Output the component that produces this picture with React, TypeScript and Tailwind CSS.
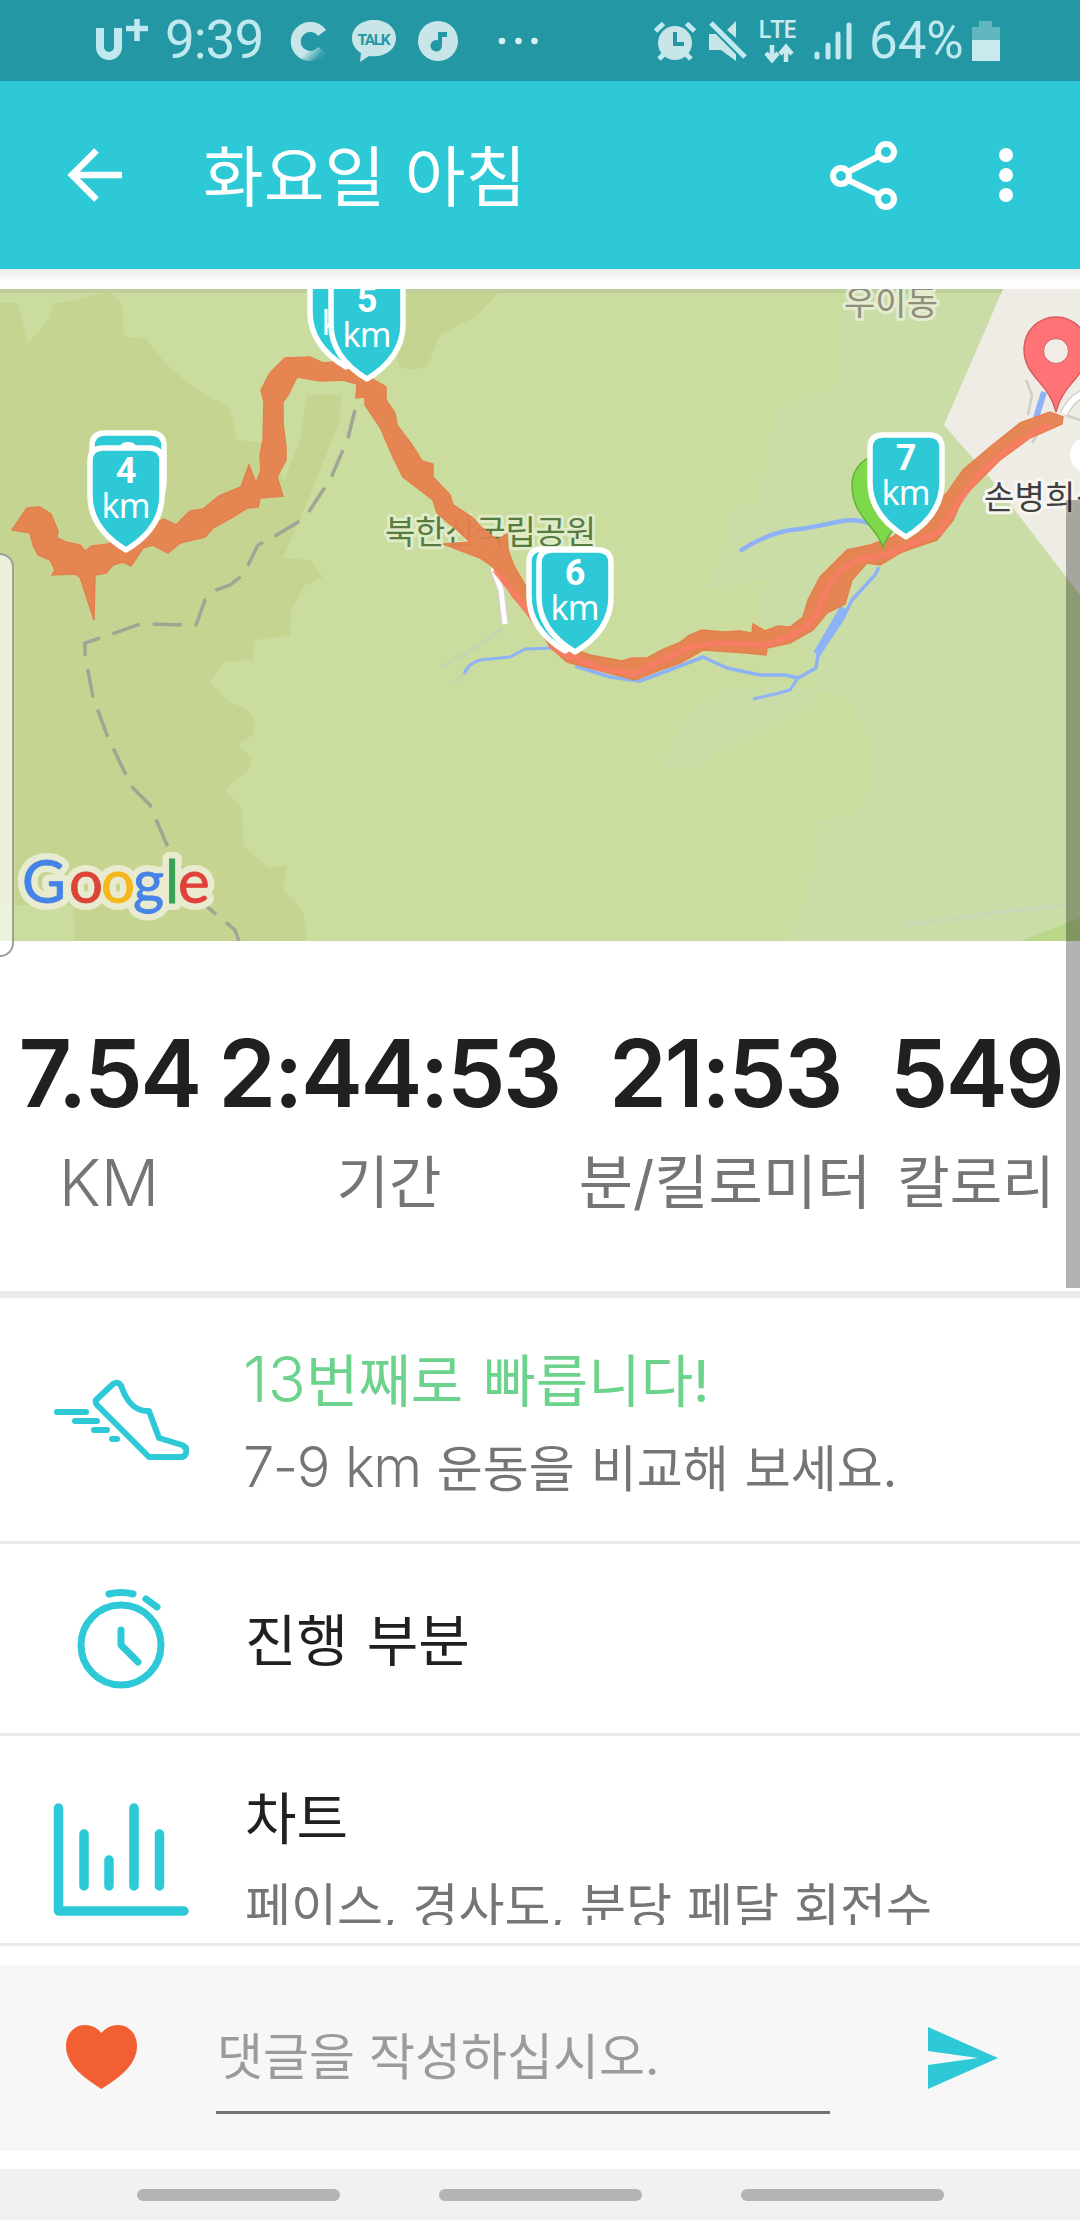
import React from "react";

const TEAL = "#2dc9d7";

function StatusBar() {
  return (
    <div className="flex h-[81px] items-center bg-[#2497a5] pl-[95px] pr-[80px] font-[Roboto] text-[#bfe9ee]">
      <svg width="54" height="44" viewBox="0 0 54 44" fill="none" stroke="#bfe9ee" className="shrink-0">
        <path d="M5 9v19a9 9 0 0 0 18 0V9" strokeWidth="8" />
        <path d="M31 9.500h22M42 0v22" strokeWidth="5.500" />
      </svg>
      <span className="ml-[16px] w-[101px] whitespace-nowrap text-[53px] font-normal leading-none tracking-[-1px]">9:39</span>
      <svg width="38" height="40" viewBox="0 0 38 40" fill="none" className="ml-[24px] shrink-0">
        <defs>
          <linearGradient id="fade" x1="0.3" y1="0.3" x2="0.95" y2="0.95">
            <stop offset="0.5" stopColor="#c8e6e8" />
            <stop offset="1" stopColor="#c8e6e8" stopOpacity="0.1" />
          </linearGradient>
        </defs>
        <path d="M32 12A14.500 14.500 0 1 0 32 29" stroke="url(#fade)" strokeWidth="10" />
      </svg>
      <svg width="46" height="44" viewBox="0 0 46 44" className="ml-[23px] shrink-0">
        <path d="M23 1C10 1 1 9 1 19c0 7 4 12 9 15l-1 9 9-6c17 2 27-7 27-18C45 9 36 1 23 1Z" fill="#c8e6e8" />
        <text x="23" y="25.500" textAnchor="middle" textLength="33" fontFamily="Roboto" fontWeight="700" fontSize="15.500" fill="#2497a5">TALK</text>
      </svg>
      <svg width="40" height="40" viewBox="0 0 40 40" className="ml-[21px] shrink-0">
        <circle cx="20" cy="20" r="20" fill="#c8e6e8" />
        <path d="M20 11h9v5h-5v8.500a5.800 5.800 0 1 1-4-5.200Z" fill="#2497a5" />
      </svg>
      <svg width="42" height="8" viewBox="0 0 42 8" fill="#d8f0f2" className="ml-[40px] shrink-0">
        <circle cx="4" cy="4" r="3.300" />
        <circle cx="20.500" cy="4" r="3.300" />
        <circle cx="36.500" cy="4" r="3.300" />
      </svg>
      <div className="ml-auto flex items-center">
        <svg width="42" height="40" viewBox="0 0 42 40">
          <circle cx="21" cy="22" r="17" fill="#c8e6e8" />
          <path d="M1.500 10 9.500 2.500M40.500 10 32.500 2.500M5 38l6-6M37 38l-6-6" stroke="#c0eaf0" strokeWidth="5" />
          <path d="M21 11v12h9" stroke="#2497a5" strokeWidth="4" fill="none" />
        </svg>
        <svg width="40" height="40" viewBox="0 0 40 40" className="ml-[12px]">
          <path d="M1 13h11l16 15v12L13 29H1ZM28 0v17l-9-8Z" fill="#c8e6e8" />
          <path d="M3 2l34 34" stroke="#2497a5" strokeWidth="9" />
          <path d="M3 2l34 34" stroke="#c0eaf0" strokeWidth="5" />
        </svg>
        <svg width="40" height="44" viewBox="0 0 40 44" className="ml-[10px]">
          <text x="0" y="19" textLength="39" fontFamily="Open Sans" fontWeight="600" fontSize="25" fill="#c8eaee">LTE</text>
          <path d="M14 26v14M8 34l6 7 6-7M28 43V29M22 35l6-7 6 7" stroke="#c8eaee" strokeWidth="4.500" fill="none" />
        </svg>
        <svg width="38" height="40" viewBox="0 0 38 40" className="ml-[16px]" stroke="#c0eaf0" strokeWidth="5" strokeLinecap="round">
          <path d="M3 33v3M14 24v12M24 13v23M35 4v32" />
        </svg>
        <span className="ml-[17px] w-[94px] whitespace-nowrap text-[51px] font-normal leading-none">64%</span>
        <svg width="28" height="42" viewBox="0 0 28 42" className="ml-[9px]">
          <path d="M0 7h7V1h13v6h8v13H0Z" fill="#62b6c0" />
          <path d="M0 20h28v21H0Z" fill="#c8eaee" />
        </svg>
      </div>
    </div>
  );
}

function AppBar() {
  return (
    <div className="flex h-[188px] items-center bg-[#2dc9d7] pl-[66px] pr-[66px] text-white">
      <svg width="58" height="56" viewBox="0 0 58 56" fill="none" stroke="white" strokeWidth="6.500">
        <path d="M56 28H7M30.500 3.500 6 28l24.500 24.500" />
      </svg>
      <h1 className="ml-[79px] mt-[4px] whitespace-nowrap text-[66px] font-normal leading-none [word-spacing:1px]">화요일 아침</h1>
      <svg width="70" height="72" viewBox="0 0 70 72" fill="none" stroke="white" strokeWidth="6" className="ml-auto">
        <circle cx="57" cy="13" r="8" />
        <circle cx="12" cy="37" r="8" />
        <circle cx="57" cy="60" r="8" />
        <path d="M50 17 19 33M50 56 19 41" />
      </svg>
      <svg width="16" height="56" viewBox="0 0 16 56" fill="white" className="ml-[99px]">
        <circle cx="8" cy="8" r="7" />
        <circle cx="8" cy="28" r="7" />
        <circle cx="8" cy="48" r="7" />
      </svg>
    </div>
  );
}

function KmPin({ x, y, n }: { x: number; y: number; n: string }) {
  return (
    <g transform={`translate(${x} ${y})`}>
      <path
        d="M-36-92Q-36-105-23-105H23Q36-105 36-92V-58C36-33 20-15 0-3C-20-15-36-33-36-58Z"
        fill={TEAL}
        stroke="white"
        strokeWidth="5.500"
        strokeLinejoin="round"
      />
      <text y="-70" textAnchor="middle" fontFamily="Roboto" fontWeight="700" fontSize="36" fill="white">{n}</text>
      <text y="-35" textAnchor="middle" fontFamily="Noto Sans, sans-serif" fontSize="34" textLength="49" fill="white">km</text>
    </g>
  );
}

const GOOGLE: [string, number, string][] = [
  ["G", 22, "#4583e8"],
  ["o", 69, "#db4437"],
  ["o", 101, "#f4b71c"],
  ["g", 133, "#4583e8"],
  ["l", 165, "#34a353"],
  ["e", 178, "#e0413a"],
];

function RouteMap() {
  return (
    <svg width="1080" height="652" viewBox="0 289 1080 652" className="block shrink-0">
      <rect y="289" width="1080" height="652" fill="#cadc9e" />
      <path d="M845 289 838 385 775 412 760 500 730 510 720 565 700 590 765 580 762 620 800 640 820 700 780 720 720 750 700 768 665 768 672 740 690 715 720 690 800 685 850 700 870 740 875 780 855 815 820 820 812 880 790 941H1080V289Z" fill="#cbdda7" />
      <path d="M0 289H108L122 305 124 337 145 338 168 366 195 388 230 408 237 440 265 443 300 440 307 395 341 395 340 420 310 495 283 558 310 560 323 577 305 585 291 610 290 635 255 640 253 660 225 662 210 682 228 702 245 708 255 718 253 735 238 745 252 758 248 770 225 790 242 808 243 845 268 868 287 865 283 890 303 910 307 941H0Z" fill="#c5d591" />
      <path d="M262 443 284 480 300 440 290 395 302 377 345 380 340 395 307 395 300 440Z" fill="#cadc9e" />
      <path d="M405 292H500L475 317 440 335 428 365 415 370 400 368 392 345Z" fill="#c5d591" />
      <path d="M17 299 55 297 48 320 28 344ZM0 905 73 905 75 941H0ZM0 289H120L60 303H0Z" fill="#cadc9e" />
      <rect y="289" width="1080" height="4" fill="#becf9b" />
      <path d="M1003 289 944 425 990 478 1080 595V289Z" fill="#efece5" />
      <path d="M1020 941 1080 918V941Z" fill="#b9d88a" />
      <path d="M905 925 960 918 1000 912 1070 905" stroke="#c9d7b4" strokeWidth="4" fill="none" />
      <path d="M440 668 480 645 503 628M450 685 470 670" stroke="#c6d5ac" strokeWidth="4" fill="none" />
      <path
        d="M355 410 348 438 331 478 308 513 298 522 275 536 258 545 248 565 240 577 230 585 216 590 205 600 196 625 140 624 112 634 85 643 85 655 93 697 107 735 125 773 133 788 150 805 166 843 176 860 205 905 235 930 239 941"
        fill="none"
        stroke="#a0a594"
        strokeWidth="3.500"
        strokeDasharray="29 13"
      />
      <g fill="none" stroke="#8db2f5" strokeLinejoin="round">
        <path d="M740 551Q770 531 800 529C835 524 850 515 870 524L884 535" strokeWidth="4.500" />
        <path d="M879 567 875 575 852 600 842 620 818 655 816 668 798 678 785 675 760 675 727 668 703 657 680 666 640 681 610 677 575 666" strokeWidth="3.500" />
        <path d="M798 678 790 690 775 694 753 699M464 674Q470 659 490 659L510 657 525 649 555 648" strokeWidth="3" />
        <path d="M844 608 817 654" strokeWidth="8" />
        <path d="M1044 392 1036 418" strokeWidth="6" />
      </g>
      <path d="M493 568 501 590 505 624" stroke="#d8d0cc" strokeWidth="8" fill="none" />
      <path d="M493 568 501 590 505 624" stroke="white" strokeWidth="5" fill="none" />
      <path d="M1026 380 1032 395 1028 415M1032 443 1040 430M1065 415 1080 420" stroke="#cfcfc4" strokeWidth="2.500" fill="none" />
      <path d="M1064 414Q1070 400 1082 394" stroke="#d4d4cc" strokeWidth="9" fill="none" />
      <path d="M1064 414Q1070 400 1082 394" stroke="white" strokeWidth="6" fill="none" />
      <g fontFamily="Noto Sans CJK KR, sans-serif" paintOrder="stroke" strokeLinejoin="round">
        <text x="385" y="544" fontSize="33" textLength="211" fill="#577c40" stroke="#e0ebc8" strokeWidth="6">북한산국립공원</text>
        <text x="844" y="315" fontSize="34" textLength="94" fill="#8f8f7c" stroke="#e4ecd0" strokeWidth="6">우이동</text>
        <text x="984" y="509" fontSize="33" textLength="122" fill="#404040" stroke="#f7f6f0" strokeWidth="6">손병희선</text>
      </g>
      <path
        d="M12 530 27 508 40 507 51 514 58 531 57 538 66 542 80 545 85 551 92 546 108 544 130 535 164 519 176 525 190 511 203 509 219 496 241 487 249 465 256 483 261 470 260 455 263 440 264 402 261 390 270 373 285 358 310 357 323 363 335 362 367 376 386 387 386 400 395 413 397 425 412 445 422 461 433 464 433 477 450 495 453 505 472 517 480 526 497 540 507 534 508 550 514 566 528 590 552 640 570 648 590 655 622 661 632 658 647 658 664 649 679 643 690 635 702 630 723 632 740 631 752 633 753 624 765 631 778 626 790 627 803 617 808 600 820 577 847 550 870 545 893 537 920 513 947 493 963 470 990 447 1020 423 1050 412 1063 417 1062 424 1030 438 1000 460 980 480 963 497 953 520 937 540 913 548 900 553 880 565 867 563 852 580 845 604 827 613 813 630 790 643 767 648 766 655 747 653 703 650 680 663 660 670 635 680 609 673 567 662 550 647 540 630 527 613 513 597 493 567 480 558 443 544 470 542 457 530 437 513 433 500 403 477 393 457 380 427 365 405 365 397 356 398 357 384 343 380 320 381 297 377 288 395 283 402 283 423 286 447 286 460 277 477 283 496 260 498 258 507 247 508 233 517 213 528 205 537 180 543 168 553 153 545 143 548 131 566 123 562 113 565 106 573 95 575 94 620 80 577 75 574 52 575 55 570 50 560 38 555 33 545 30 533Z"
        fill="#e5804e"
        fillOpacity="0.94"
        stroke="#e5804e"
        strokeWidth="1.500"
      />
      <path
        d="M495 570 513 592 540 628 560 652 600 668 634 674 660 661 690 647 715 643 765 645Q808 634 819 610 828 574 858 560L890 554 915 542 940 532Q956 505 975 480 1005 446 1050 424"
        stroke="#fa7c66"
        strokeOpacity="0.8"
        strokeWidth="6"
        strokeLinejoin="round"
        fill="none"
      />
      <path d="M883 547C876 525 852 517 852 485A31 31 0 0 1 914 485C914 517 890 525 883 547Z" fill="#7fd84a" stroke="#5fb338" strokeWidth="1.500" />
      <path d="M1056 412C1049 382 1024 377 1024 349A32 32 0 0 1 1088 349C1088 377 1063 382 1056 412Z" fill="#ff7376" stroke="#d95d5f" strokeWidth="1.500" />
      <circle cx="1056" cy="351" r="12.500" fill="#f1ede6" stroke="#d95d5f" />
      <circle cx="1088" cy="455" r="18" fill="white" />
      <KmPin x={128} y={538} n="3" />
      <KmPin x={126} y={553} n="4" />
      <KmPin x={346} y={370} n="2" />
      <KmPin x={367} y={382} n="5" />
      <KmPin x={565} y={654} n="1" />
      <KmPin x={575} y={655} n="6" />
      <KmPin x={906} y={540} n="7" />
      <g fontFamily="Lato, sans-serif" fontSize="60" fontWeight="400" strokeLinejoin="round">
        {GOOGLE.map(([c, x], i) => (
          <text key={i} x={x} y="903" fill="#e8ebcf" stroke="#e8ebcf" strokeWidth="14">{c}</text>
        ))}
        {GOOGLE.map(([c, x, color], i) => (
          <text key={i} x={x} y="903" fill={color} stroke={color} strokeWidth="0.800">{c}</text>
        ))}
      </g>
    </svg>
  );
}

function Stat({ value, label, className, labelClass }: { value: string; label: string; className: string; labelClass: string }) {
  return (
    <div className={"flex shrink-0 flex-col items-center whitespace-nowrap " + className}>
      <div className="text-[93px] font-semibold leading-[92px] tracking-[-2.500px] text-[#202020]">{value}</div>
      <div className={"mt-[32px] leading-[64px] text-[#757575] " + labelClass}>{label}</div>
    </div>
  );
}

function ShoeIcon() {
  return (
    <svg width="136" height="84" viewBox="53 1379 136 84" fill="none" stroke={TEAL} strokeWidth="6" strokeLinecap="round" strokeLinejoin="round">
      <path d="M96 1400 113 1384Q119 1380 122 1388C127 1402 136 1412 149 1411L159 1438 182 1445Q188 1448 186 1453 185 1457 181 1457H149L97 1405Q95 1402 96 1400Z" />
      <path d="M57 1412h29M75 1421h22M94 1430h13M112 1439h5" />
    </svg>
  );
}

function StopwatchIcon() {
  return (
    <svg width="92" height="104" viewBox="75 1587 92 104" fill="none" stroke={TEAL} strokeWidth="7" strokeLinecap="round" strokeLinejoin="round">
      <circle cx="121" cy="1645" r="40" />
      <path d="M121 1630v15l17 17M109 1594q12-3 24 0M146 1599l11 8" />
    </svg>
  );
}

function ChartIcon() {
  return (
    <svg width="136" height="114" viewBox="53 1802 136 114" fill="none" stroke={TEAL} strokeWidth="9.500" strokeLinecap="round" strokeLinejoin="round">
      <path d="M58.500 1808v103H184M84 1834v52M109 1860v26M134 1808v78M159.500 1834v52" />
    </svg>
  );
}

function CommentBar() {
  return (
    <div className="flex h-[186px] shrink-0 items-center bg-[#f7f7f7] pl-[66px] pr-[82px]">
      <svg width="71" height="65" viewBox="0 0 71 65" className="-mt-[2px]">
        <path d="M35.500 64C22 55 0 42 0 21 0 8 9 0 19 0c8 0 13 4 16.500 8C39 4 44 0 52 0c10 0 19 8 19 21 0 21-22 34-35.500 43Z" fill="#f25f33" />
      </svg>
      <div className="ml-[79px] mt-[5px] flex h-[107px] w-[614px] items-center border-b-[3px] border-[#6f7472] pb-[4px]">
        <span className="whitespace-nowrap pl-[1px] text-[50px] font-normal leading-none text-[#9b9b9b]">댓글을 작성하십시오.</span>
      </div>
      <svg width="70" height="62" viewBox="0 0 70 62" className="ml-auto">
        <path d="M0 0 70 31 0 62V38L50 31 0 24Z" fill={TEAL} />
      </svg>
    </div>
  );
}

export default function App() {
  return (
    <div className="relative flex h-[2220px] w-[1080px] flex-col overflow-hidden bg-white font-['Inter','Noto_Sans_CJK_KR',sans-serif]">
      <StatusBar />
      <AppBar />
      <div className="h-[20px] shrink-0 bg-gradient-to-b from-[#ececec] to-[#fdfdfd] to-60%" />
      <RouteMap />

      <section className="flex h-[357px] shrink-0 border-b-[7px] border-[#ebebeb] pt-[86px]">
        <Stat value="7.54" label="KM" className="w-[218px]" labelClass="text-[65px] font-light" />
        <Stat value="2:44:53" label="기간" className="w-[342px]" labelClass="text-[57px]" />
        <Stat value="21:53" label="분/킬로미터" className="w-[330px]" labelClass="text-[59px]" />
        <Stat value="549" label="칼로리" className="w-[172px]" labelClass="text-[57px]" />
      </section>

      <section className="flex h-[246px] shrink-0 border-b-[3px] border-[#ebebeb] whitespace-nowrap">
        <div className="flex w-[243px] pl-[53px] pt-[81px]"><ShoeIcon /></div>
        <div className="pt-[49px]">
          <div className="h-[64px] text-[57px] leading-[64px] text-[#6dd38c] [word-spacing:4px]">
            <span className="text-[63px] font-light">13</span>번째로 빠릅니다!
          </div>
          <div className="mt-[24px] h-[64px] text-[50px] leading-[64px] text-[#757575] [word-spacing:2px]">
            <span className="text-[56px] font-light tracking-[-1.500px]">7-9 km</span> 운동을 비교해 보세요.
          </div>
        </div>
      </section>

      <section className="flex h-[192px] shrink-0 items-center border-b-[3px] border-[#ebebeb] whitespace-nowrap">
        <div className="w-[245px] pl-[75px]"><StopwatchIcon /></div>
        <div className="mt-[5px] text-[56px] leading-none text-[#202020] [word-spacing:3px]">진행 부분</div>
      </section>

      <section className="flex h-[210px] shrink-0 border-b-[3px] border-[#ebebeb] whitespace-nowrap">
        <div className="flex w-[245px] pl-[53px] pt-[66px]"><ChartIcon /></div>
        <div className="h-[189px] overflow-hidden pt-[51px]">
          <div className="text-[56px] leading-[64px] text-[#202020]">차트</div>
          <div className="mt-[24px] text-[50px] leading-[64px] text-[#757575] [word-spacing:1px]">페이스, 경사도, 분당 페달 회전수</div>
        </div>
      </section>

      <div className="h-[19px] shrink-0" />
      <CommentBar />
      <div className="h-[18px] shrink-0" />

      <nav className="flex h-[51px] shrink-0 justify-center gap-[99px] bg-[#f1f1f1] pt-[20px]">
        <div className="h-[12px] w-[203px] rounded-full bg-[#b4b4b4]" />
        <div className="h-[12px] w-[203px] rounded-full bg-[#b4b4b4]" />
        <div className="h-[12px] w-[203px] rounded-full bg-[#b4b4b4]" />
      </nav>

      <div className="absolute left-[-4px] top-[553px] h-[404px] w-[18px] rounded-r-[14px] border-2 border-[#9da196] bg-white/65" />
      <div className="absolute right-0 top-[500px] h-[788px] w-[14px] bg-black/30" />
    </div>
  );
}
